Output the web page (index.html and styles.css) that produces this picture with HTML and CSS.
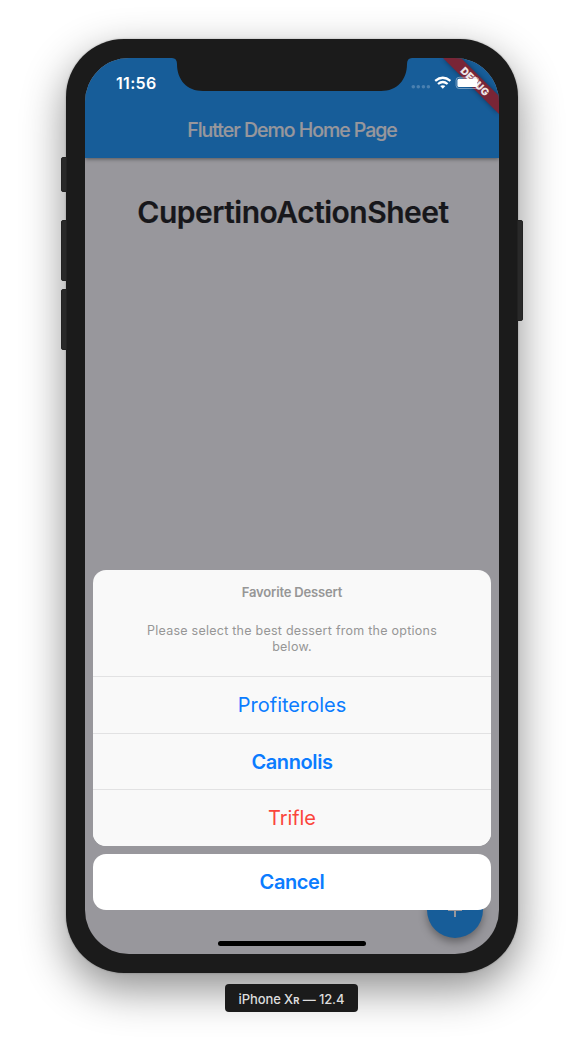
FILE: index.html
```html
<!DOCTYPE html>
<html lang="en">
<head>
<meta charset="utf-8">
<title>Flutter Demo Home Page</title>
<link rel="stylesheet" href="styles.css">
</head>
<body>
<div class="stage">
  <div class="phone">
    <span class="key key-mute"></span>
    <span class="key key-up"></span>
    <span class="key key-down"></span>
    <span class="key key-power"></span>
    <div class="screen">
      <header class="appbar">
        <div class="status"><span class="clock">11:56</span></div>
        <div class="toolbar"><span class="title">Flutter Demo Home Page</span></div>
      </header>
      <main class="content">
        <h1 class="heading"><span>CupertinoActionSheet</span></h1>
        <div class="sheet">
          <section class="group">
            <div class="message">
              <strong class="message-title">Favorite Dessert</strong>
              <p class="message-body">Please select the best dessert from the options<br>below.</p>
            </div>
            <button class="action profiteroles"><span>Profiteroles</span></button>
            <button class="action cannolis"><span>Cannolis</span></button>
            <button class="action trifle"><span>Trifle</span></button>
          </section>
          <button class="cancel"><span>Cancel</span></button>
        </div>
      </main>
      <div class="fab">
        <svg width="24" height="24" viewBox="0 0 24 24"><path d="M19 13h-6v6h-2v-6H5v-2h14z" fill="#98979c"/></svg>
      </div>
      <div class="home"></div>
      <svg class="overlay" width="414" height="120" viewBox="0 0 414 120">
        <defs><filter id="soft" x="-30%" y="-30%" width="160%" height="160%"><feGaussianBlur stdDeviation="2.5"/></filter></defs>
        <path d="M358 0h18l38 38v18z" fill="#000" opacity=".4" filter="url(#soft)"/>
        <path d="M358 0h18l38 38v18z" fill="#792536"/>
        <text class="debug" transform="translate(390 23.5) rotate(45)" y="3.7" text-anchor="middle">DEBUG</text>
        <path d="M87 0Q92 0 92 6C92 22 102 33 118 33H296C312 33 322 22 322 6Q322 0 327 0Z" fill="#1b1b1b"/>
        <g fill="#4a80b0"><circle cx="328.3" cy="28.7" r="1.8"/><circle cx="333.3" cy="28.7" r="1.8"/><circle cx="338.4" cy="28.7" r="1.8"/><circle cx="343.4" cy="28.7" r="1.8"/></g>
        <g fill="none" stroke="#fff" stroke-width="2.3">
          <path d="M350.2 22.9Q357.8 16.6 365.4 22.9"/>
          <path d="M353 26Q357.8 21.9 362.6 26"/>
        </g>
        <path d="M355.2 28.1Q357.8 26.2 360.4 28.1L357.8 30.7Z" fill="#fff"/>
        <rect x="371.1" y="19.3" width="22.8" height="11.2" rx="3" fill="none" stroke="#fff" stroke-opacity=".4"/>
        <rect x="372.4" y="20.8" width="20" height="8.2" rx="1.6" fill="#fff"/>
        <path d="M395 23q1.4.4 1.4 1.9T395 26.8z" fill="#fff" opacity=".4"/>
      </svg>
    </div>
  </div>
  <div class="device-label"><span>iPhone X<b class="small">R</b> — 12.4</span></div>
</div>
</body>
</html>
```
FILE: styles.css
```css
* { box-sizing: border-box; }
body { margin: 0; background: #fff; font-family: Inter, "Liberation Sans", sans-serif; }
.stage { width: 584px; height: 1048px; padding-top: 39px; display: flex; flex-direction: column; align-items: center; overflow: hidden; }
.phone { position: relative; flex: none; width: 452px; height: 934px; padding: 19px; border-radius: 58px; background: #1b1b1b; box-shadow: 0 16px 44px rgba(0,0,0,.45), 0 0 2px rgba(0,0,0,.3); }
.screen { position: relative; width: 414px; height: 896px; display: flex; flex-direction: column; overflow: hidden; border-radius: 44px; background: #98979c; }
.key { position: absolute; left: -5px; width: 6px; border-radius: 2px 0 0 2px; background: #292929; border: 1px solid #222; }
.key-mute { top: 118px; height: 35px; }
.key-up { top: 181px; height: 61px; }
.key-down { top: 250px; height: 61px; }
.key-power { top: 181px; left: auto; right: -5px; height: 101px; border-radius: 0 2px 2px 0; }
.appbar { position: relative; flex: none; height: 100px; background: #175d99; box-shadow: 0 1px 4px rgba(0,0,0,.45); }
.status { height: 44px; padding: 15px 0 0 31px; }
.clock { display: block; color: #fff; font-size: 16px; line-height: 20px; font-weight: 600; letter-spacing: .3px; }
.toolbar { height: 56px; display: flex; align-items: center; justify-content: center; }
.title { color: #98979c; font-size: 19.5px; line-height: 24px; font-weight: 500; letter-spacing: -1.02px; white-space: nowrap; -webkit-text-stroke: .2px #98979c; }
.content { flex: 1; display: flex; flex-direction: column; justify-content: space-between; padding: 34px 8px 44px; }
.heading { margin: 0; color: #17171b; text-align: center; font-size: 30px; line-height: 40px; font-weight: 600; letter-spacing: -.5px; white-space: nowrap; -webkit-text-stroke: .2px #17171b; }
.heading span { margin-left: 2px; }
.sheet { position: relative; z-index: 2; display: flex; flex-direction: column; gap: 8px; }
.group { height: 276px; border-radius: 13px; overflow: hidden; background: #f9f9f9; }
.message { height: 106px; padding-top: 14px; text-align: center; color: #969696; font-size: 13px; line-height: 16px; }
.message-title { display: block; font-weight: 600; letter-spacing: -.17px; }
.message-body { margin: 23px 0 0; font-size: 12.5px; letter-spacing: .25px; }
.action, .cancel { display: flex; align-items: center; justify-content: center; width: 100%; padding: 0; border: 0; font-family: inherit; font-size: 20px; line-height: 24px; color: #0b7cff; }
.action { height: 56.67px; border-top: 1px solid #e2e2e3; background: #f9f9f9; }
.cannolis, .cancel { font-weight: 600; letter-spacing: -.4px; }
.cannolis { padding-top: 1px; }
.trifle { color: #fb453b; letter-spacing: -.1px; }
.cancel { height: 56px; border-radius: 13px; background: #fff; }
.fab { position: absolute; left: 342px; top: 824px; width: 56px; height: 56px; display: grid; place-items: center; border-radius: 50%; background: #175d99; box-shadow: 0 4px 8px rgba(0,0,0,.35); }
.home { position: absolute; z-index: 3; left: 133px; bottom: 8px; width: 148px; height: 5px; border-radius: 3px; background: #000; }
.overlay { position: absolute; left: 0; top: 0; }
.debug { fill: #ece4e6; font-size: 10.2px; font-weight: 900; }
.device-label { position: relative; flex: none; width: 133px; height: 28px; margin-top: 11px; margin-right: 1px; display: flex; align-items: center; justify-content: center; border-radius: 4px; background: #1b1b1b; color: #ddd; font-size: 13px; font-weight: 500; line-height: 16px; letter-spacing: -.1px; white-space: nowrap; padding-top: 3px; }
.small { font-size: 9.5px; }
```
